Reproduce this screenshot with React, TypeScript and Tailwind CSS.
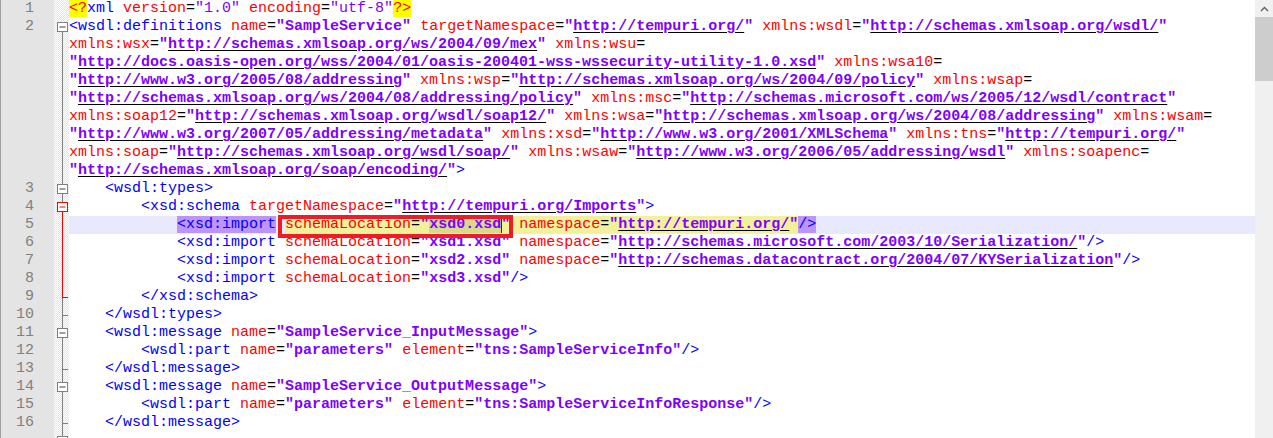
import React from "react";

type Fold = "none" | "first" | "box" | "redBox" | "line" | "redLine" | "redEnd" | "tick";

type Row = { n?: number; fold: Fold; text?: string; custom?: "decl" | "current" };

const rows: Row[] = [
  { n: 1, fold: "none", custom: "decl" },
  { n: 2, fold: "first", text: '<wsdl:definitions name="SampleService" targetNamespace="http://tempuri.org/" xmlns:wsdl="http://schemas.xmlsoap.org/wsdl/"' },
  { fold: "line", text: 'xmlns:wsx="http://schemas.xmlsoap.org/ws/2004/09/mex" xmlns:wsu=' },
  { fold: "line", text: '"http://docs.oasis-open.org/wss/2004/01/oasis-200401-wss-wssecurity-utility-1.0.xsd" xmlns:wsa10=' },
  { fold: "line", text: '"http://www.w3.org/2005/08/addressing" xmlns:wsp="http://schemas.xmlsoap.org/ws/2004/09/policy" xmlns:wsap=' },
  { fold: "line", text: '"http://schemas.xmlsoap.org/ws/2004/08/addressing/policy" xmlns:msc="http://schemas.microsoft.com/ws/2005/12/wsdl/contract"' },
  { fold: "line", text: 'xmlns:soap12="http://schemas.xmlsoap.org/wsdl/soap12/" xmlns:wsa="http://schemas.xmlsoap.org/ws/2004/08/addressing" xmlns:wsam=' },
  { fold: "line", text: '"http://www.w3.org/2007/05/addressing/metadata" xmlns:xsd="http://www.w3.org/2001/XMLSchema" xmlns:tns="http://tempuri.org/"' },
  { fold: "line", text: 'xmlns:soap="http://schemas.xmlsoap.org/wsdl/soap/" xmlns:wsaw="http://www.w3.org/2006/05/addressing/wsdl" xmlns:soapenc=' },
  { fold: "line", text: '"http://schemas.xmlsoap.org/soap/encoding/">' },
  { n: 3, fold: "box", text: "    <wsdl:types>" },
  { n: 4, fold: "redBox", text: '        <xsd:schema targetNamespace="http://tempuri.org/Imports">' },
  { n: 5, fold: "redLine", custom: "current" },
  { n: 6, fold: "redLine", text: '            <xsd:import schemaLocation="xsd1.xsd" namespace="http://schemas.microsoft.com/2003/10/Serialization/"/>' },
  { n: 7, fold: "redLine", text: '            <xsd:import schemaLocation="xsd2.xsd" namespace="http://schemas.datacontract.org/2004/07/KYSerialization"/>' },
  { n: 8, fold: "redLine", text: '            <xsd:import schemaLocation="xsd3.xsd"/>' },
  { n: 9, fold: "redEnd", text: "        </xsd:schema>" },
  { n: 10, fold: "tick", text: "    </wsdl:types>" },
  { n: 11, fold: "box", text: '    <wsdl:message name="SampleService_InputMessage">' },
  { n: 12, fold: "line", text: '        <wsdl:part name="parameters" element="tns:SampleServiceInfo"/>' },
  { n: 13, fold: "tick", text: "    </wsdl:message>" },
  { n: 14, fold: "box", text: '    <wsdl:message name="SampleService_OutputMessage">' },
  { n: 15, fold: "line", text: '        <wsdl:part name="parameters" element="tns:SampleServiceInfoResponse"/>' },
  { n: 16, fold: "tick", text: "    </wsdl:message>" },
  { fold: "box", text: "" },
];

function Value({ v }: { v: string }) {
  const inner = v.slice(1, -1);
  if (inner.startsWith("http")) {
    return (
      <span className="font-bold text-[#8000ff]">
        "<span className="underline decoration-black underline-offset-2">{inner}</span>"
      </span>
    );
  }
  return <span className="font-bold text-[#8000ff]">{v}</span>;
}

function Xml({ text }: { text: string }) {
  const parts = text.match(/<\/?[\w:.-]+|\/?>|"[^"]*"|[\w:.-]+(?==)|=|\s+|[^\s]+/g) || [];
  return (
    <>
      {parts.map((p, i) => {
        if (/^<|^\/?>$/.test(p)) return <span key={i} className="text-[#0000ff]">{p}</span>;
        if (p.startsWith('"')) return <Value key={i} v={p} />;
        if (p === "=") return <span key={i} className="text-black">=</span>;
        if (/^\s+$/.test(p)) return <span key={i}>{p}</span>;
        return <span key={i} className="text-[#ff0000]">{p}</span>;
      })}
    </>
  );
}

function Decl() {
  return (
    <>
      <span className="bg-[#ffff00] text-[#ff0000]">{"<?"}</span>
      <span className="text-[#0000ff]">xml</span>
      <span className="text-[#ff0000]"> version</span>
      <span>=</span>
      <span className="text-[#8000ff]">"1.0"</span>
      <span className="text-[#ff0000]"> encoding</span>
      <span>=</span>
      <span className="text-[#8000ff]">"utf-8"</span>
      <span className="bg-[#ffff00] text-[#ff0000]">{"?>"}</span>
    </>
  );
}

function Current() {
  return (
    <>
      <span>{"            "}</span>
      <span className="bg-[#bc94fa] text-[#0000ff]">{"<xsd:import"}</span>
      <span> </span>
      <span className="bg-[#f1f19c]">
        <span className="text-[#ff0000]">schemaLocation</span>
        <span>=</span>
        <span className="font-bold text-[#8000ff]">"</span>
        <span className="font-bold text-[#8000ff] bg-[#d9d98c] border-r border-[#202060] -mr-px">xsd0.xsd</span>
        <span className="font-bold text-[#8000ff]">"</span>
        <span> </span>
        <span className="text-[#ff0000]">namespace</span>
        <span>=</span>
        <Value v={'"http://tempuri.org/"'} />
      </span>
      <span className="bg-[#bc94fa] text-[#0000ff]">{"/>"}</span>
    </>
  );
}

function FoldMark({ kind }: { kind: Fold }) {
  const gray = "#808080";
  const red = "#ff0000";
  if (kind === "none") return null;
  return (
    <svg width="15" height="18" viewBox="0 0 15 18" className="block">
      {kind === "line" && <line x1="8.5" y1="0" x2="8.5" y2="18" stroke={gray} />}
      {kind === "redLine" && <line x1="8.5" y1="0" x2="8.5" y2="18" stroke={red} />}
      {kind === "tick" && (
        <>
          <line x1="8.5" y1="0" x2="8.5" y2="18" stroke={gray} />
          <line x1="8.5" y1="9.5" x2="14" y2="9.5" stroke={gray} />
        </>
      )}
      {kind === "redEnd" && (
        <>
          <line x1="8.5" y1="9.5" x2="8.5" y2="18" stroke={gray} />
          <line x1="8.5" y1="0" x2="8.5" y2="10" stroke={red} />
          <line x1="8.5" y1="9.5" x2="14" y2="9.5" stroke={red} />
        </>
      )}
      {(kind === "first" || kind === "box" || kind === "redBox") && (
        <>
          {kind !== "first" && <line x1="8.5" y1="0" x2="8.5" y2="4" stroke={gray} />}
          <line x1="8.5" y1="13" x2="8.5" y2="18" stroke={kind === "redBox" ? red : gray} />
          <rect x="3.5" y="4.5" width="10" height="9" fill="#fff" stroke={kind === "redBox" ? red : gray} />
          <line x1="5.5" y1="9" x2="11.5" y2="9" stroke={kind === "redBox" ? red : "#404040"} />
        </>
      )}
    </svg>
  );
}

export default function App() {
  return (
    <div className="flex h-[438px] w-[1273px] overflow-hidden bg-white font-['Liberation_Mono',monospace] text-[15px] leading-[18px]">
      <div className="relative flex-1 overflow-hidden">
        {rows.map((r, i) => (
          <div key={i} className="flex h-[18px]">
            <div className="w-[54px] shrink-0 border-l border-[#a0a0a0] bg-[#e4e4e4] pr-[20px] text-right text-[#808080]">
              {r.n ?? ""}
            </div>
            <div className="w-[15px] shrink-0 bg-[image:repeating-conic-gradient(#e4e4e4_0%_25%,#ffffff_0%_50%)] bg-[length:2px_2px]">
              <FoldMark kind={r.fold} />
            </div>
            <div className={"flex-1 whitespace-pre text-black " + (r.custom === "current" ? "bg-[#e8e8ff]" : "")}>
              {r.custom === "decl" ? <Decl /> : r.custom === "current" ? <Current /> : <Xml text={r.text || ""} />}
            </div>
          </div>
        ))}
        <div className="absolute left-[278px] top-[215px] h-[23px] w-[235px] border-4 border-[#ee1c24]" />
      </div>
      <div className="flex w-[18px] shrink-0 flex-col bg-[#f0f0f0]">
        <div className="flex h-[17px] items-center justify-center">
          <svg width="9" height="6" viewBox="0 0 9 6">
            <path d="M1 5 L4.5 1.5 L8 5" fill="none" stroke="#606060" strokeWidth="1.4" />
          </svg>
        </div>
        <div className="h-[64px] bg-[#cdcdcd]" />
      </div>
    </div>
  );
}
